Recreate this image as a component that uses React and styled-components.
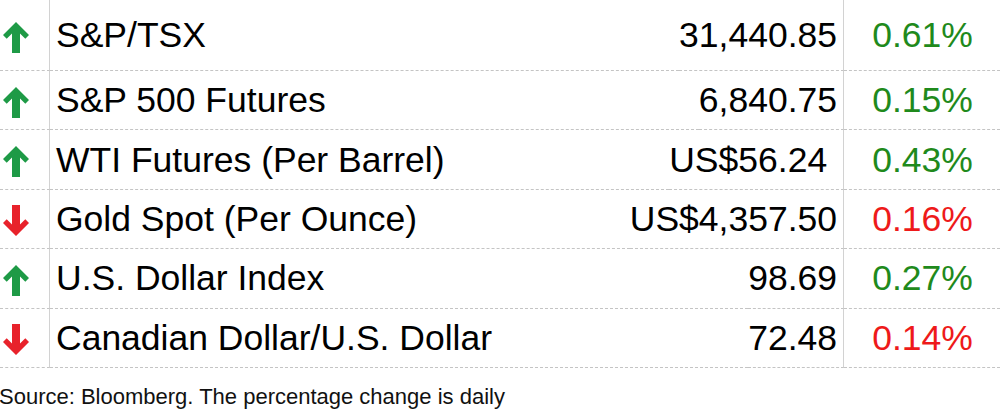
import React from "react";
import styled, { createGlobalStyle } from "styled-components";

const GlobalStyle = createGlobalStyle`
  html, body { margin: 0; padding: 0; background: #fff; }
  body { font-family: "Liberation Sans", Arial, Helvetica, sans-serif; color: #000; }
`;

const Page = styled.div`
  width: 1000px;
  height: 413px;
  overflow: hidden;
  display: flex;
  flex-direction: column;
`;

const Table = styled.div`
  display: flex;
  flex-direction: column;
`;

const Row = styled.div`
  display: grid;
  grid-template-columns: 50px 1fr auto 156px;
  height: ${(p) => p.$h}px;
`;

const Cell = styled.div`
  display: flex;
  align-items: center;
  border-bottom: 1px dashed #c4c4c4;
  border-right: ${(p) => (p.$divider ? "1px solid #d2d2d2" : "none")};
  box-sizing: border-box;
  font-size: 35.5px;
  line-height: 40px;
  white-space: pre;
`;

const ArrowCell = styled(Cell)`
  justify-content: flex-start;
  padding-left: 3px;
  padding-top: 4px;
`;

const NameCell = styled(Cell)`
  padding-left: 6px;
`;

const ValueCell = styled(Cell)`
  justify-content: flex-end;
  padding-right: 6px;
`;

const PctCell = styled(Cell)`
  justify-content: center;
  padding-left: 1px;
  color: ${(p) => (p.$up ? "#1f8a1c" : "#ee1a1a")};
`;

const Footer = styled.div`
  font-size: 22px;
  line-height: 26px;
  padding-top: 16px;
  color: #111;
  margin-left: -1px;
`;

const ArrowSvg = styled.svg`
  display: block;
  width: 26px;
  height: 31px;
`;

function Arrow({ up }) {
  return (
    <ArrowSvg viewBox="0 0 26 31" style={up ? undefined : { transform: "rotate(180deg)" }}>
      <path
        d="M13 0 L26 13 L22.3 16.7 L17 11.4 L17 31 L9 31 L9 11.4 L3.7 16.7 L0 13 Z"
        fill={up ? "#1e9a46" : "#e8222b"}
      />
    </ArrowSvg>
  );
}

const data = [
  { up: true, name: "S&P/TSX", value: "31,440.85", pct: "0.61%" },
  { up: true, name: "S&P 500 Futures", value: "6,840.75", pct: "0.15%" },
  { up: true, name: "WTI Futures (Per Barrel)", value: "US$56.24\u00a0", pct: "0.43%" },
  { up: false, name: "Gold Spot (Per Ounce)", value: "US$4,357.50", pct: "0.16%" },
  { up: true, name: "U.S. Dollar Index", value: "98.69", pct: "0.27%" },
  { up: false, name: "Canadian Dollar/U.S. Dollar", value: "72.48", pct: "0.14%" },
];

export default function App() {
  return (
    <>
      <GlobalStyle />
      <Page>
        <Table>
          {data.map((r, i) => (
            <Row key={r.name} $h={i === 0 ? 71 : 59.4}>
              <ArrowCell $divider>
                <Arrow up={r.up} />
              </ArrowCell>
              <NameCell>{r.name}</NameCell>
              <ValueCell $divider>{r.value}</ValueCell>
              <PctCell $up={r.up}>{r.pct}</PctCell>
            </Row>
          ))}
        </Table>
        <Footer>Source: Bloomberg. The percentage change is daily</Footer>
      </Page>
    </>
  );
}
